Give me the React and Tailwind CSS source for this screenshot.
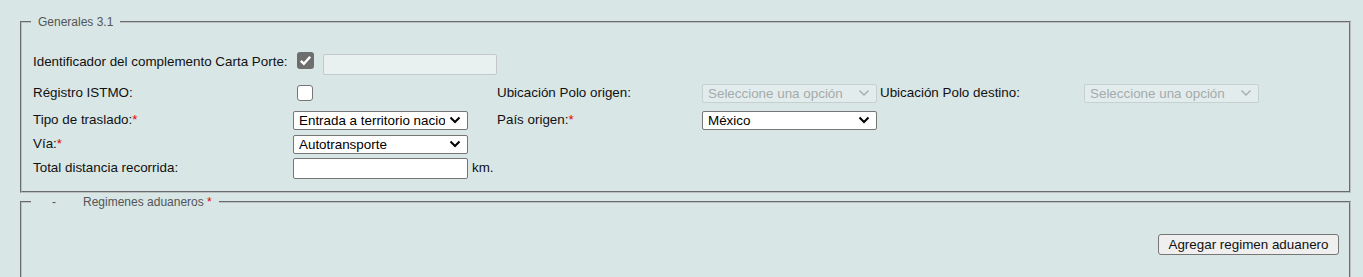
import React from 'react';
import clsx from 'clsx';

function Chevron({ disabled }) {
  return (
    <svg width="12" height="8" viewBox="0 0 12 8" className="shrink-0">
      <path
        d="M1.5 1.5 L6 6 L10.5 1.5"
        fill="none"
        stroke={disabled ? '#a3abab' : '#000'}
        strokeWidth={disabled ? 1.3 : 2}
      />
    </svg>
  );
}

function FakeSelect({ value, disabled }) {
  return (
    <div
      className={clsx(
        'flex h-[19px] w-[175px] items-center rounded-[2px] border pl-[5px] pr-[6px]',
        disabled
          ? 'border-[#c7d0d0] bg-[#e3ecec] text-[#a3abab]'
          : 'border-[#767676] bg-white text-black'
      )}
    >
      <span className="w-[146px] shrink-0 overflow-hidden whitespace-nowrap leading-[17px]">{value}</span>
      <span className="flex flex-1 justify-end">
        <Chevron disabled={disabled} />
      </span>
    </div>
  );
}

function CheckBox({ checked, className }) {
  if (checked) {
    return (
      <span className={clsx('ml-[4px] flex h-[17px] w-[17px] items-center justify-center rounded-[3px] bg-[#6e6e6e]', className)}>
        <svg width="13" height="11" viewBox="0 0 13 11">
          <path d="M1.8 5.8 L4.9 8.8 L11.2 1.8" fill="none" stroke="#fff" strokeWidth="2.4" />
        </svg>
      </span>
    );
  }
  return <span className={clsx('ml-[4px] block h-[16px] w-[16px] rounded-[3px] border border-[#767676] bg-white', className)} />;
}

function Req() {
  return <span className="text-[#e60000]">*</span>;
}

export default function App() {
  return (
    <div className="min-h-screen overflow-hidden bg-[#d8e6e6] pt-[15px] text-[13.4px] text-[#111]" style={{ fontFamily: '"Liberation Sans", Arial, sans-serif' }}>
      <fieldset className="ml-[20px] mr-[12px] border-2 border-[#bcc0c0] pb-[12px] pl-[11px] pr-[10px] pt-[19px] [border-style:groove]">
        <legend className="ml-[-2px] px-[7px] text-[12px] leading-[14px] text-[#555]">Generales 3.1</legend>

        <div className="flex h-[28px] items-center">
          <span className="w-[260px] shrink-0">Identificador del complemento Carta Porte:</span>
          <CheckBox checked className="mb-[3px]" />
          <div className="ml-[9px] mt-[5px] h-[21px] w-[174px] rounded-[2px] border border-[#c3c9c9] bg-[#e9f0f0]" />
        </div>

        <div className="grid h-[34px] grid-cols-[260px_204px_205px_178px_204px_1fr] items-center">
          <span>Régistro ISTMO:</span>
          <div><CheckBox /></div>
          <span>Ubicación Polo origen:</span>
          <FakeSelect value="Seleccione una opción" disabled />
          <span>Ubicación Polo destino:</span>
          <FakeSelect value="Seleccione una opción" disabled />
        </div>

        <div className="grid h-[20px] grid-cols-[260px_204px_205px_178px_204px_1fr] items-center">
          <span>Tipo de traslado:<Req /></span>
          <FakeSelect value="Entrada a territorio nacional" />
          <span>País origen:<Req /></span>
          <FakeSelect value="México" />
        </div>

        <div className="grid h-[28px] grid-cols-[260px_204px_205px_178px_204px_1fr] items-center">
          <span>Vía:<Req /></span>
          <FakeSelect value="Autotransporte" />
        </div>

        <div className="flex h-[21px] items-center">
          <span className="w-[260px] shrink-0">Total distancia recorrida:</span>
          <div className="h-[21px] w-[175px] rounded-[2px] border border-[#767676] bg-white" />
          <span className="ml-[4px]">km.</span>
        </div>
      </fieldset>

      <fieldset className="ml-[20px] mr-[12px] mt-[2px] border-2 border-[#bcc0c0] pb-[30px] pl-[11px] pr-[10px] [border-style:groove]">
        <legend className="ml-[-2px] px-[7px] text-[12px] leading-[14px] text-[#555]">
          <span className="ml-[14px] mr-[27px]">-</span>Regimenes aduaneros <span className="text-[#e60000]">*</span>
        </legend>
        <div className="flex justify-end pt-[25px]">
          <button className="h-[21px] w-[181px] rounded-[3px] border border-[#767676] bg-[#efefef] text-center leading-[19px] text-[#111]">
            Agregar regimen aduanero
          </button>
        </div>
      </fieldset>
    </div>
  );
}
